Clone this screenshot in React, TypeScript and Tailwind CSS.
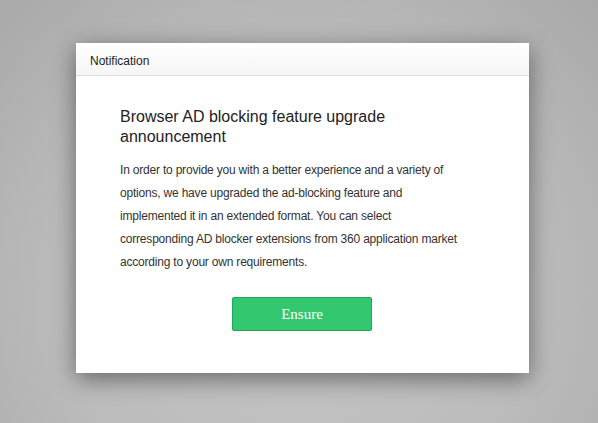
import React from "react";

export default function App() {
  return (
    <div
      className="w-[598px] h-[423px] pt-[43px] pl-[76px] overflow-hidden"
      style={{ background: "radial-gradient(ellipse at 50% 70%, #c4c4c4 0%, #bcbcbc 55%, #a9a9a9 100%)" }}
    >
      <div className="w-[453px] h-[330px] bg-white shadow-[0_6px_22px_rgba(0,0,0,0.45)] flex flex-col" style={{ fontFamily: '"Liberation Sans", Arial, sans-serif' }}>
        <div className="h-[33px] shrink-0 border-b border-[#dddddd] bg-gradient-to-b from-white to-[#f6f6f6] flex items-center pl-[14px] pt-[3px] text-[12px] text-[#222]">
          Notification
        </div>
        <div className="pl-[44px] pr-[67px] pt-[31px] text-[#333]">
          <div className="text-[16px] leading-[20px] text-[#222] w-[300px]">
            Browser AD blocking feature upgrade announcement
          </div>
          <p className="mt-[12px] text-[12px] leading-[23px] tracking-[-0.2px]">
            In order to provide you with a better experience and a variety of options, we have upgraded the ad-blocking feature and implemented it in an extended format. You can select corresponding AD blocker extensions from 360 application market according to your own requirements.
          </p>
          <div className="mt-[23px] ml-[112px] flex">
            <button
              className="w-[140px] h-[34px] bg-[#33c76f] border border-[#1ea85a] rounded-[2px] text-white text-[15px]"
              style={{ fontFamily: '"Liberation Serif", "Times New Roman", serif' }}
            >
              Ensure
            </button>
          </div>
        </div>
      </div>
    </div>
  );
}
